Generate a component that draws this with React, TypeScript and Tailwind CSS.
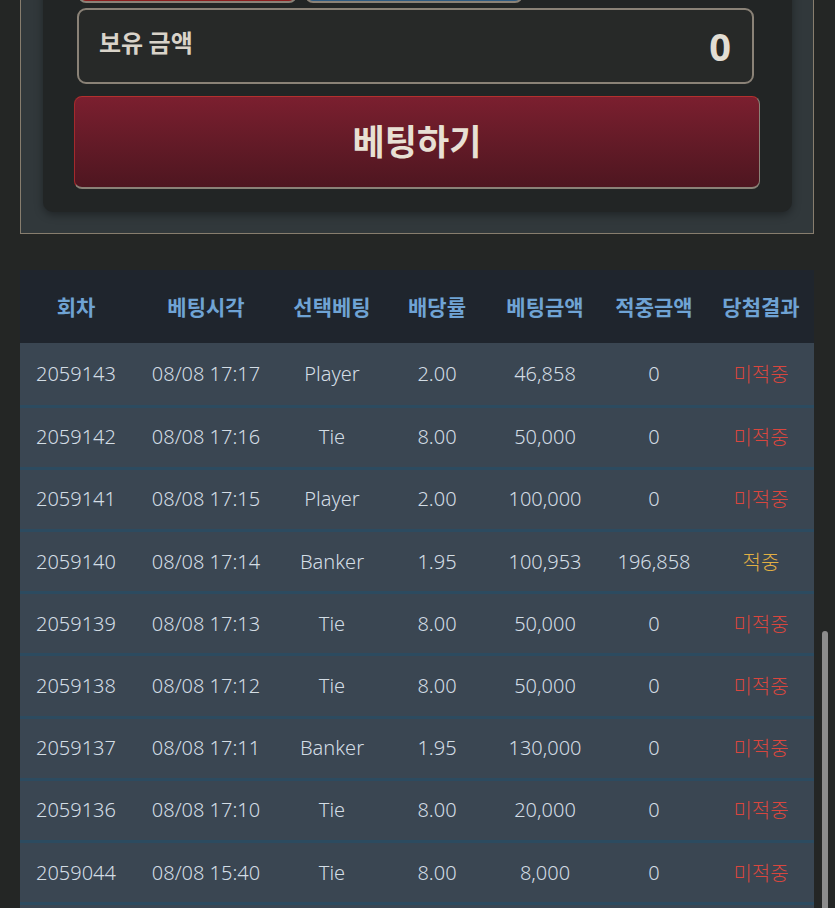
import React from 'react'

const ROWS = [
  { round: '2059143', time: '08/08 17:17', pick: 'Player', odds: '2.00', bet: '46,858', win: '0', won: false },
  { round: '2059142', time: '08/08 17:16', pick: 'Tie', odds: '8.00', bet: '50,000', win: '0', won: false },
  { round: '2059141', time: '08/08 17:15', pick: 'Player', odds: '2.00', bet: '100,000', win: '0', won: false },
  { round: '2059140', time: '08/08 17:14', pick: 'Banker', odds: '1.95', bet: '100,953', win: '196,858', won: true },
  { round: '2059139', time: '08/08 17:13', pick: 'Tie', odds: '8.00', bet: '50,000', win: '0', won: false },
  { round: '2059138', time: '08/08 17:12', pick: 'Tie', odds: '8.00', bet: '50,000', win: '0', won: false },
  { round: '2059137', time: '08/08 17:11', pick: 'Banker', odds: '1.95', bet: '130,000', win: '0', won: false },
  { round: '2059136', time: '08/08 17:10', pick: 'Tie', odds: '8.00', bet: '20,000', win: '0', won: false },
  { round: '2059044', time: '08/08 15:40', pick: 'Tie', odds: '8.00', bet: '8,000', win: '0', won: false },
]

const HEADERS = ['회차', '베팅시각', '선택베팅', '배당률', '베팅금액', '적중금액', '당첨결과']

const COLS = 'grid grid-cols-[112px_148px_104px_106px_110px_108px_106px]'

export default function App() {
  return (
    <div className="relative h-[908px] overflow-hidden bg-[#242625] font-['Noto_Sans','Noto_Sans_CJK_KR',sans-serif]">
      <div className="ml-[20px] w-[794px]">
        {/* bet panel, scrolled so only its lower part shows */}
        <div className="-mt-[100px] border-x border-b border-[#877d6e] bg-[#31383b] pl-[22px] pr-[21px] pb-[21px]">
          <div className="rounded-b-[10px] bg-[#222525] pl-[31px] pr-[32px] pt-[55px] pb-[23px] shadow-[0_3px_8px_rgba(0,0,0,0.35)]">
            <div className="ml-[4px] flex gap-[8px]">
              <div className="h-[48px] w-[219px] rounded-[8px] border-2 border-[#8a8277] bg-[#8b1e1e]" />
              <div className="h-[48px] w-[218px] rounded-[8px] border-2 border-[#8a8277] bg-[#2f5a80]" />
            </div>
            <div className="ml-[3px] mr-[6px] mt-[5px] flex h-[76px] items-center justify-between rounded-[9px] border-2 border-[#8a8277] bg-[#272928] pl-[20px] pr-[21px]">
              <span className="-mt-[8px] font-['Noto_Sans_CJK_KR',sans-serif] text-[24px] font-bold text-[#d9d3c9]">보유 금액</span>
              <span className="text-[38px] font-bold leading-none text-[#e2ddd4]">0</span>
            </div>
            <button className="mt-[12px] flex h-[93px] w-full items-center justify-center rounded-[8px] border border-b-2 border-t-[#b3302e] border-l-[#a52a2c] border-r-[#8a8277] border-b-[#8a8277] bg-gradient-to-b from-[#7b1f2f] to-[#4e1620]">
              <span className="-mt-[3px] font-['Noto_Sans_CJK_KR',sans-serif] text-[35px] font-bold text-[#e8e0d4]">베팅하기</span>
            </button>
          </div>
        </div>

        {/* history table */}
        <div className="mt-[36px]">
          <div className={`${COLS} h-[72.5px] items-center bg-[#1f252d]`}>
            {HEADERS.map((h) => (
              <div key={h} className="text-center font-['Noto_Sans_CJK_KR',sans-serif] text-[21px] font-bold text-[#6fa3d4]">
                {h}
              </div>
            ))}
          </div>
          {ROWS.map((r, i) => (
            <div
              key={r.round}
              className={`${COLS} h-[62.2px] items-center bg-[#3a4652] text-[20px] font-light text-[#d3dde5] ${i > 0 ? 'border-t-[3px] border-[#2c4b60]' : ''}`}
            >
              <div className="text-center">{r.round}</div>
              <div className="text-center">{r.time}</div>
              <div className="text-center">{r.pick}</div>
              <div className="text-center">{r.odds}</div>
              <div className="text-center">{r.bet}</div>
              <div className="text-center">{r.win}</div>
              <div className={`text-center font-['Noto_Sans_CJK_KR',sans-serif] ${r.won ? 'text-[#e2b043]' : 'text-[#d9463e]'}`}>
                {r.won ? '적중' : '미적중'}
              </div>
            </div>
          ))}
          <div className="h-[40px] border-t-[3px] border-[#2c4b60] bg-[#3a4652]" />
        </div>
      </div>

      {/* scrollbar thumb */}
      <div className="absolute right-[7px] top-[631px] h-[320px] w-[6px] rounded-full bg-[#8c8c8c]" />
    </div>
  )
}
